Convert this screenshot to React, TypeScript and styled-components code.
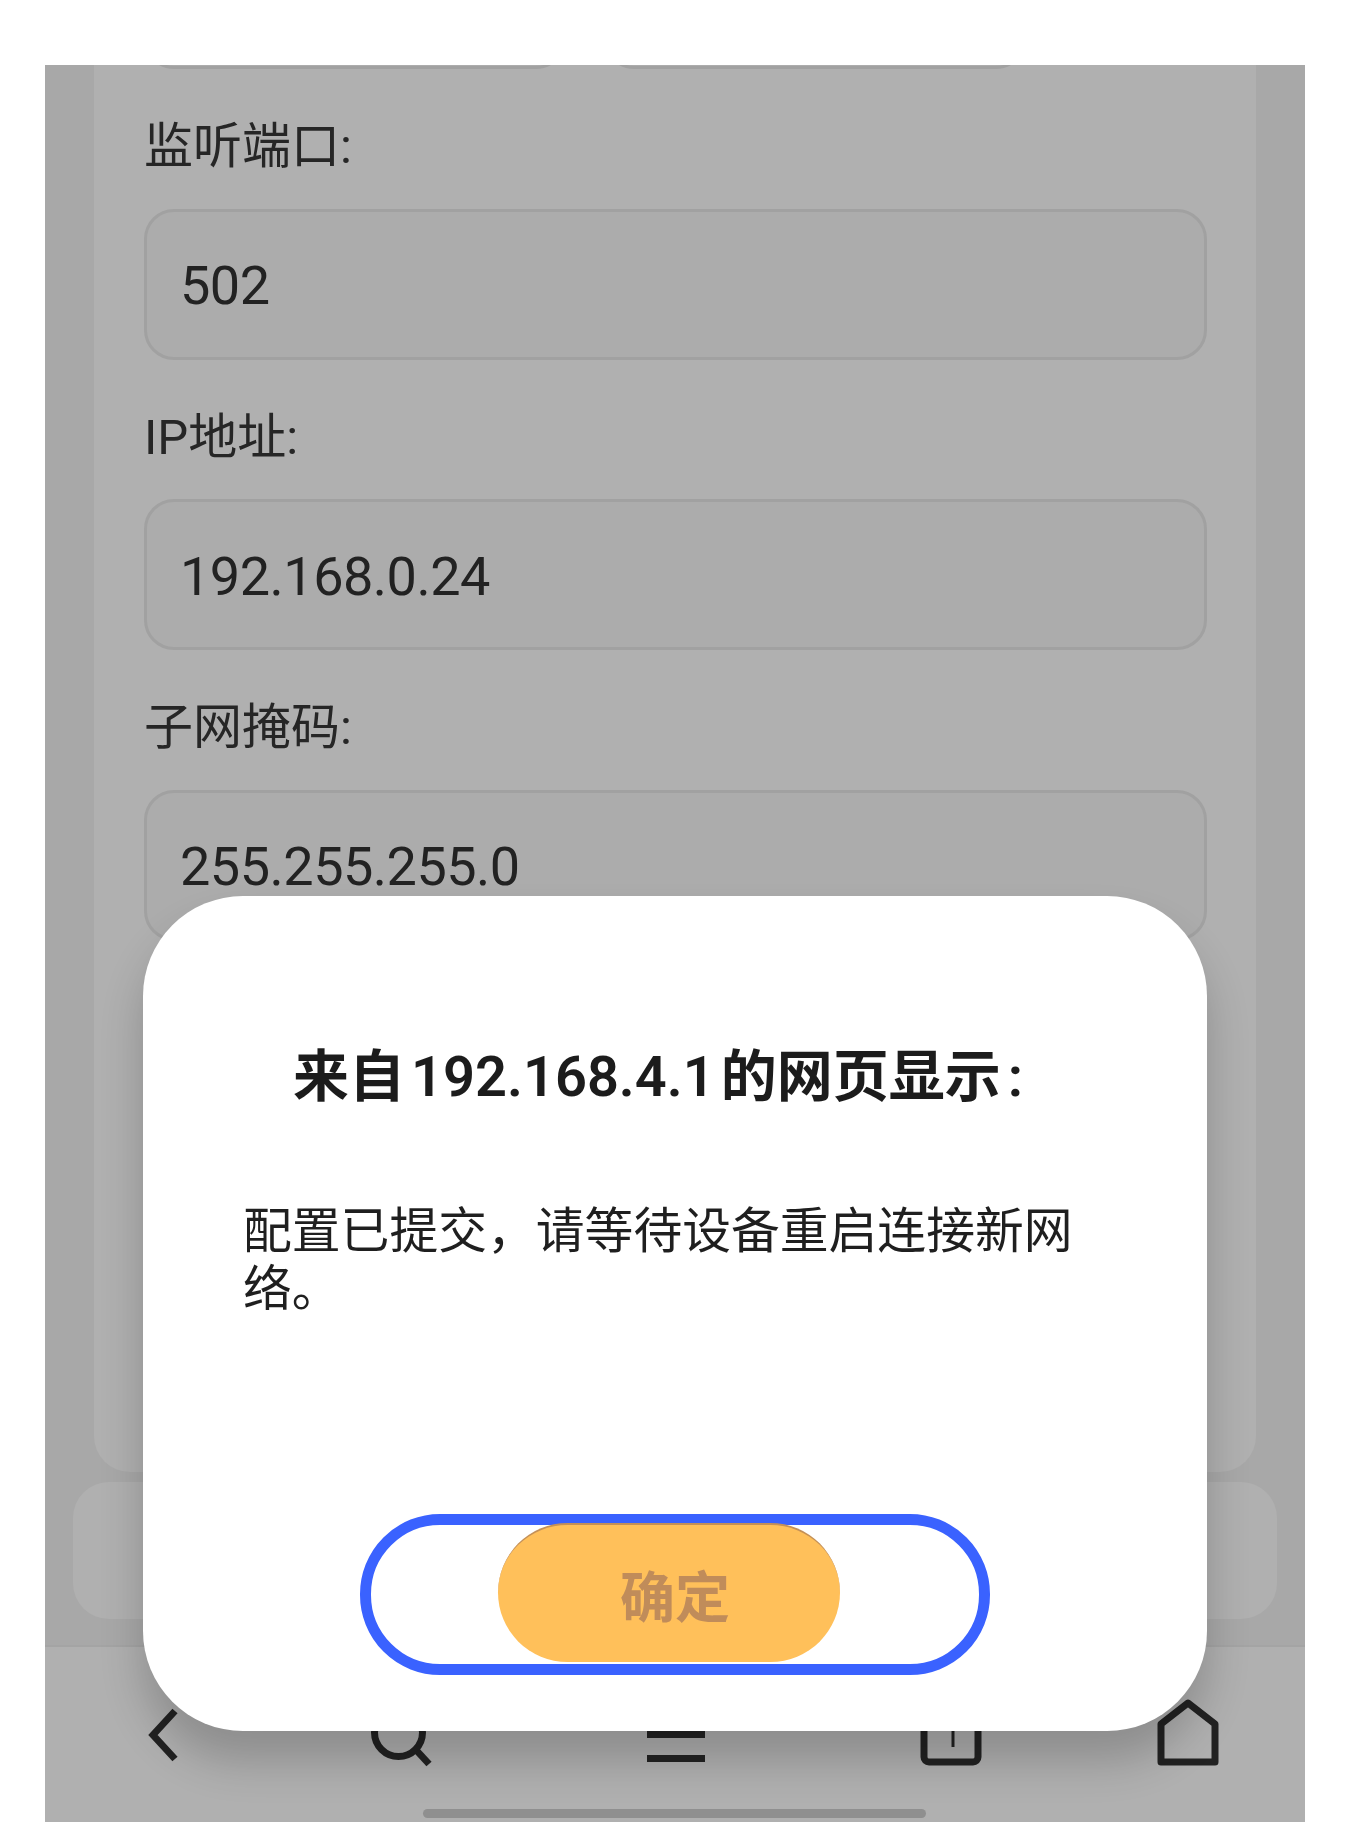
import { FC } from 'react'
import styled, { createGlobalStyle } from 'styled-components'

const GlobalStyle = createGlobalStyle`
    html, body {
        margin: 0;
        padding: 0;
        background: #fff;
    }
    * {
        box-sizing: border-box;
    }
    body {
        font-family: Roboto, "Noto Sans CJK SC", sans-serif;
        color: #222;
    }
`

const Page = styled.div`
    width: 1350px;
    height: 1846px;
    padding: 65px 45px 24px;
`

const Screen = styled.div`
    position: relative;
    display: flex;
    flex-direction: column;
    width: 1260px;
    height: 1757px;
    overflow: hidden;
    background: #a8a8a8;
`

const Main = styled.div`
    display: flex;
    flex-direction: column;
    align-items: center;
    height: 1582px;
    overflow: hidden;
    border-bottom: 2px solid #a4a4a4;
`

const Card = styled.div`
    flex: none;
    width: 1162px;
    height: 1407px;
    padding: 0 49px 0 50px;
    background: #b0b0b0;
    border-radius: 0 0 36px 36px;
`

const CutRow = styled.div`
    display: flex;
    gap: 38px;
    margin: -147px 0 0 0;
`

const CutField = styled.div`
    width: 422px;
    height: 151px;
    background: #acacac;
    border: 3px solid #a1a1a1;
    border-radius: 30px;
`

const Label = styled.div`
    height: 60px;
    margin: 48px 0 31.5px;
    font-size: 49px;
    line-height: 60px;
    color: #262626;
`

const Field = styled.div`
    display: flex;
    align-items: center;
    height: 151px;
    padding: 3px 0 0 33px;
    background: #acacac;
    border: 3px solid #a1a1a1;
    border-radius: 30px;
    font-size: 54px;
    letter-spacing: -0.5px;
    color: #222;
`

const ActionCard = styled.div`
    flex: none;
    width: 1204px;
    height: 137px;
    margin-top: 10px;
    background: #b0b0b0;
    border-radius: 36px;
`

const Nav = styled.div`
    display: grid;
    grid-template-columns: 195px 277px 277px 273px 201px;
    justify-items: center;
    flex: 1;
    padding: 50px 0 0 20px;
    background: #b0b0b0;
`

const NavIcon = styled.svg`
    width: 72px;
    height: 72px;
    fill: none;
    stroke: #222;
    stroke-width: 7;
`

const HomeBar = styled.div`
    position: absolute;
    left: 378px;
    bottom: 4px;
    width: 503px;
    height: 9px;
    border-radius: 5px;
    background: #8f8f8f;
`

const Dialog = styled.div`
    position: absolute;
    left: 98px;
    top: 831px;
    width: 1064px;
    height: 835px;
    padding: 147px 100px 0;
    background: #fff;
    border-radius: 100px;
    box-shadow: 0 30px 44px rgba(0, 0, 0, 0.2);
`

const Title = styled.div`
    padding-left: 50px;
    font-size: 56px;
    line-height: 68px;
    font-weight: 600;
    color: #1c1c1c;
    white-space: nowrap;
`

const TitleHost = styled.span`
    margin: 0 6px;
`

const TitleColon = styled.span`
    margin-left: 7px;
`

const Message = styled.div`
    margin-top: 92px;
    font-size: 48.8px;
    line-height: 58px;
    color: #1f1f1f;
`

const Ring = styled.div`
    position: absolute;
    left: 217px;
    top: 618px;
    display: flex;
    justify-content: center;
    width: 630px;
    height: 161px;
    border: 11px solid #3a62ff;
    border-radius: 80px;
`

const ConfirmButton = styled.button`
    width: 342px;
    height: 139px;
    margin: -2px 0 0 -12px;
    padding: 0 0 2px 12px;
    border: none;
    border-top: 2px solid #c49058;
    border-radius: 70px;
    background: #ffc05a;
    font-family: "Noto Sans CJK SC", sans-serif;
    font-size: 55px;
    font-weight: 700;
    color: #c08c5a;
`

const App: FC = () => {
    return (
        <Page>
            <GlobalStyle />
            <Screen>
                <Main>
                    <Card>
                        <CutRow>
                            <CutField />
                            <CutField />
                        </CutRow>
                        <Label>监听端口:</Label>
                        <Field>502</Field>
                        <Label>IP地址:</Label>
                        <Field>192.168.0.24</Field>
                        <Label>子网掩码:</Label>
                        <Field>255.255.255.0</Field>
                    </Card>
                    <ActionCard />
                </Main>
                <Nav>
                    <NavIcon viewBox="0 0 72 72">
                        <path d="M48 14 26 38l22 24" />
                    </NavIcon>
                    <NavIcon viewBox="0 0 72 72">
                        <circle cx="35.5" cy="35.5" r="24" />
                        <path d="M54 54l12 13" />
                    </NavIcon>
                    <NavIcon viewBox="0 0 72 72">
                        <path d="M7 13.5h58M7 37.5h58M7 61.5h58" />
                    </NavIcon>
                    <NavIcon viewBox="0 0 72 72">
                        <rect x="9" y="8" width="54" height="57" rx="5" />
                        <path d="M38 23v27" strokeWidth="3" />
                    </NavIcon>
                    <NavIcon viewBox="0 0 72 72">
                        <path d="M36 6 63 27v38H9V27Z" strokeLinejoin="round" />
                    </NavIcon>
                </Nav>
                <HomeBar />
                <Dialog>
                    <Title>
                        来自<TitleHost>192.168.4.1</TitleHost>的网页显示<TitleColon>:</TitleColon>
                    </Title>
                    <Message>配置已提交&#xFF0C;请等待设备重启连接新网络。</Message>
                    <Ring>
                        <ConfirmButton type="button">确定</ConfirmButton>
                    </Ring>
                </Dialog>
            </Screen>
        </Page>
    )
}

export default App
